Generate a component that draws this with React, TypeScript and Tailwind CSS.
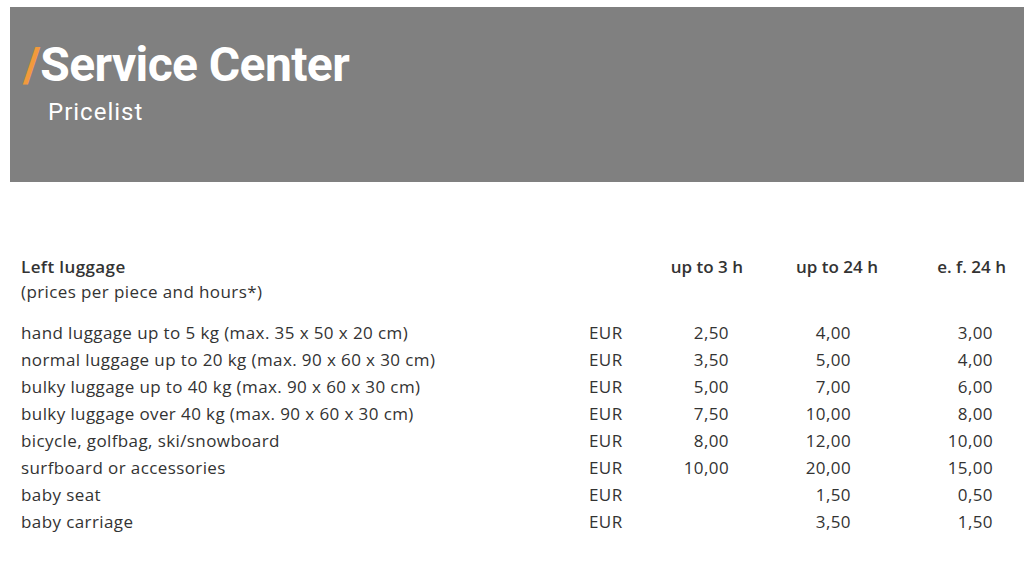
const rows: [string, string, string, string][] = [
  ["hand luggage up to 5 kg (max. 35 x 50 x 20 cm)", "2,50", "4,00", "3,00"],
  ["normal luggage up to 20 kg (max. 90 x 60 x 30 cm)", "3,50", "5,00", "4,00"],
  ["bulky luggage up to 40 kg (max. 90 x 60 x 30 cm)", "5,00", "7,00", "6,00"],
  ["bulky luggage over 40 kg (max. 90 x 60 x 30 cm)", "7,50", "10,00", "8,00"],
  ["bicycle, golfbag, ski/snowboard", "8,00", "12,00", "10,00"],
  ["surfboard or accessories", "10,00", "20,00", "15,00"],
  ["baby seat", "", "1,50", "0,50"],
  ["baby carriage", "", "3,50", "1,50"],
];

export default function App() {
  return (
    <div className="min-h-[573px] w-[1024px] bg-white font-['Open_Sans',sans-serif] text-[#333]">
      <div className="pt-[7px] pl-[10px]">
        <div className="h-[175px] bg-[#808080] pl-[13px] pt-[28px] font-['Roboto',sans-serif] text-white">
          <h1 className="text-[48px] font-bold leading-[60px] tracking-[-0.6px]">
            <span className="text-[#f29a3c]">/</span>Service Center
          </h1>
          <p className="mt-[2px] pl-[25px] text-[24px] leading-[30px] tracking-[1px]">Pricelist</p>
        </div>
      </div>

      <div className="pl-[21px] pt-[72px] text-[17px] tracking-[0.4px]">
        <div className="grid grid-cols-[568px_51px_103px_135px_128px] leading-[25px]">
          <div className="font-semibold">Left luggage</div>
          <div />
          <div className="text-right font-semibold tracking-normal">up to 3 h</div>
          <div className="text-right font-semibold tracking-normal">up to 24 h</div>
          <div className="text-right font-semibold tracking-normal">e. f. 24 h</div>
          <div className="col-span-5">(prices per piece and hours*)</div>
        </div>

        <div className="mt-[15px] grid grid-cols-[568px_51px_103px_135px_128px] leading-[27px]">
          {rows.map(([label, a, b, c]) => (
            <div key={label} className="contents">
              <div>{label}</div>
              <div>EUR</div>
              <div className="pr-[14px] text-right">{a}</div>
              <div className="pr-[27px] text-right">{b}</div>
              <div className="pr-[13px] text-right">{c}</div>
            </div>
          ))}
        </div>
      </div>
    </div>
  );
}
